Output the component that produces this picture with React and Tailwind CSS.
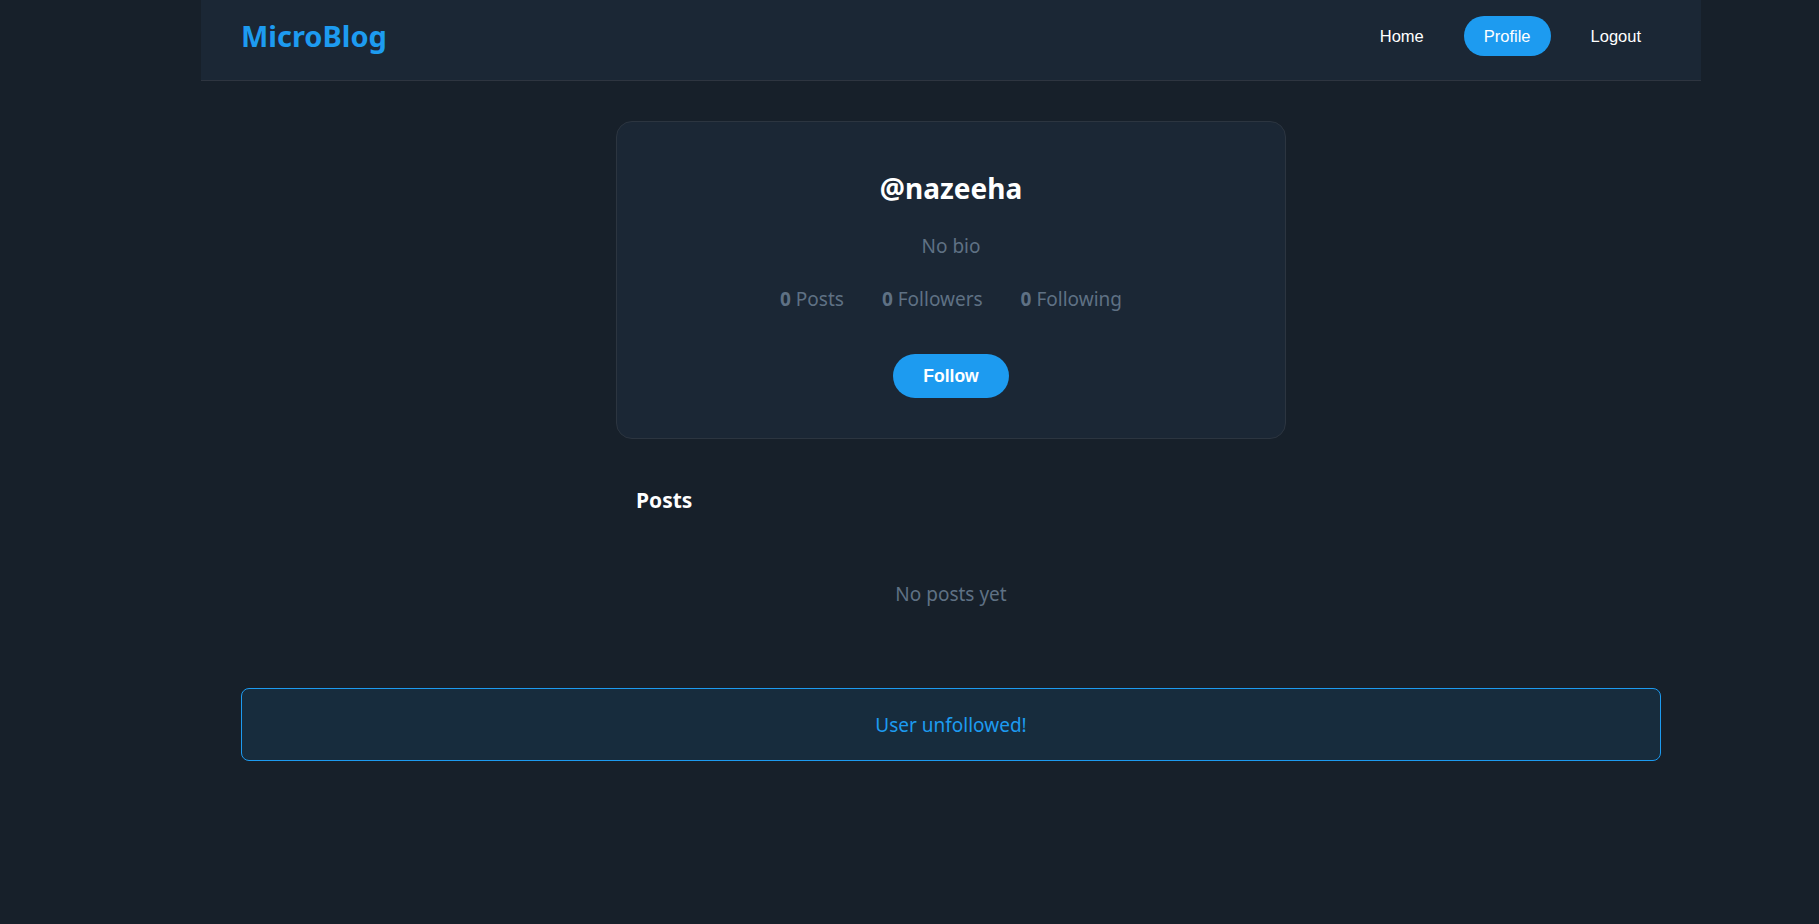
import React, { useState } from 'react';

const NAV = ['Home', 'Profile', 'Logout'];

function Stat({ value, label }) {
  return (
    <span>
      <span className="font-bold">{value}</span> {label}
    </span>
  );
}

export default function App() {
  const [active, setActive] = useState('Profile');

  return (
    <div className="min-h-screen bg-[#17202a] font-['Noto_Sans',sans-serif] text-white">
      <div className="ml-[201px] w-[1500px]">
        {/* top bar */}
        <header className="flex items-center justify-between border-b border-[#2e3540] bg-[#1b2735] px-10 pt-4 pb-6">
          <div className="text-[29px] leading-10 font-bold text-[#1d9bf0]">MicroBlog</div>
          <nav className="flex items-center gap-5">
            {NAV.map((item) => (
              <button
                key={item}
                type="button"
                onClick={() => setActive(item)}
                className={
                  'rounded-full px-5 py-[10px] font-["Liberation_Sans",Arial,sans-serif] text-[16.5px] leading-5 text-white ' +
                  (active === item ? 'bg-[#1d9bf0]' : '')
                }
              >
                {item}
              </button>
            ))}
          </nav>
        </header>

        <main className="px-10 pt-10 pb-10">
          {/* profile card */}
          <section className="mx-auto max-w-[670px] rounded-2xl border border-[#2c3540] bg-[#1b2735] px-10 pt-12 pb-10 text-center">
            <h1 className="text-[28px] leading-9 font-bold">@nazeeha</h1>
            <p className="mt-[26px] text-[19px] leading-7 text-[#5f7184]">No bio</p>
            <div className="mt-[25px] flex justify-center gap-[38px] text-[19px] leading-7 text-[#5f7184]">
              <Stat value={0} label="Posts" />
              <Stat value={0} label="Followers" />
              <Stat value={0} label="Following" />
            </div>
            <button
              type="button"
              className="mt-[41px] rounded-full bg-[#1d9bf0] px-[30px] py-3 font-['Liberation_Sans',Arial,sans-serif] text-[17.5px] leading-5 font-bold text-white"
            >
              Follow
            </button>
          </section>

          {/* posts */}
          <section className="mx-auto mt-[47px] max-w-[670px]">
            <h2 className="px-5 text-[21px] leading-7 font-bold">Posts</h2>
            <p className="mt-[66px] text-center text-[19px] leading-7 text-[#5f7184]">No posts yet</p>
          </section>

          {/* toast */}
          <div className="mt-[80px] rounded-lg border border-[#1d9bf0] bg-[#1d9bf0]/10 pt-[22px] pb-[21px] text-center text-[19px] leading-7 text-[#1d9bf0]">
            User unfollowed!
          </div>
        </main>
      </div>
    </div>
  );
}
